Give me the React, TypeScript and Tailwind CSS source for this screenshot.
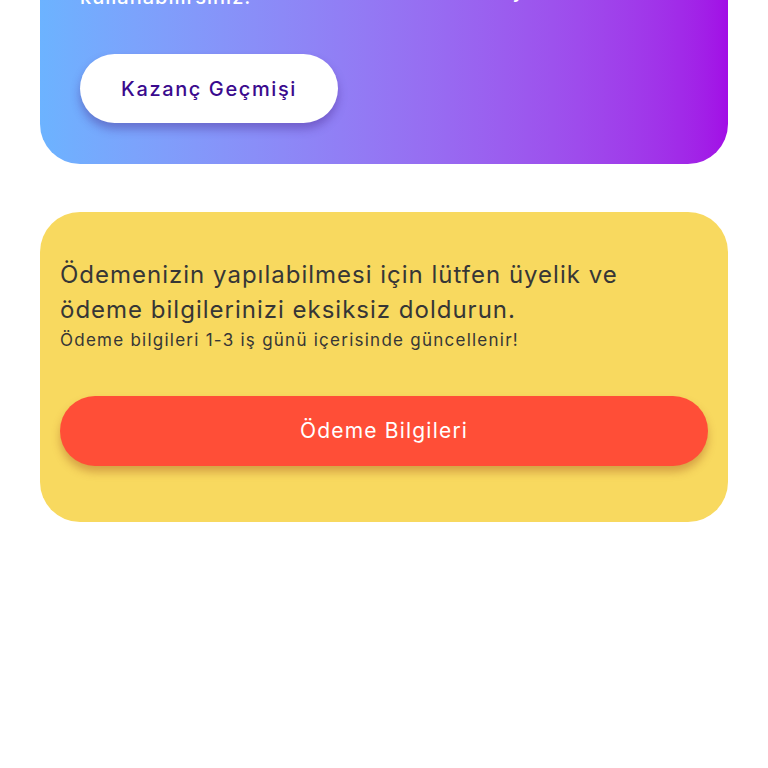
import React from 'react'

const font = { fontFamily: 'Inter, "Noto Sans", sans-serif' }

const EarningsCard = () => (
  <div className="-mt-[110px] rounded-[40px] bg-gradient-to-r from-[#6cb3ff] to-[#a20de6] px-10 pt-8 pb-[41px]">
    <div className="flex items-end justify-between text-white">
      <p className="whitespace-nowrap text-[20px] leading-[30px] font-medium tracking-[1px]">
        Kazançlarınızı dilediğiniz zaman
        <br />
        ödeme talebi oluşturarak
        <br />
        kullanabilirsiniz.
      </p>
      <span className="mr-[163px] mb-[8px] shrink-0 whitespace-nowrap text-[20px] leading-[26px] font-medium tracking-[1px]">
        Bu Ay
      </span>
    </div>
    <button className="mt-[42px] h-[69px] w-[258px] rounded-full bg-white text-[20px] font-medium tracking-[1.6px] text-[#3a0a8e] shadow-[0_6px_10px_rgba(60,20,120,0.35)]">
      Kazanç Geçmişi
    </button>
  </div>
)

const PaymentCard = () => (
  <div className="mt-12 rounded-[40px] bg-[#f8d95f] px-5 pt-[45px] pb-[56px]">
    <p className="text-[24px] leading-[35px] tracking-[1px] text-[#363636]">
      Ödemenizin yapılabilmesi için lütfen üyelik ve
      <br />
      ödeme bilgilerinizi eksiksiz doldurun.
    </p>
    <p className="text-[17px] leading-[27px] tracking-[1.25px] text-[#363636]">
      Ödeme bilgileri 1-3 iş günü içerisinde güncellenir!
    </p>
    <button className="mt-[42px] h-[70px] w-full rounded-full bg-[#ff4e37] text-[21px] tracking-[1.2px] text-white shadow-[0_6px_8px_rgba(150,60,20,0.35)]">
      Ödeme Bilgileri
    </button>
  </div>
)

export default function App() {
  return (
    <div className="min-h-[768px] overflow-hidden bg-white px-10" style={font}>
      <EarningsCard />
      <PaymentCard />
    </div>
  )
}
